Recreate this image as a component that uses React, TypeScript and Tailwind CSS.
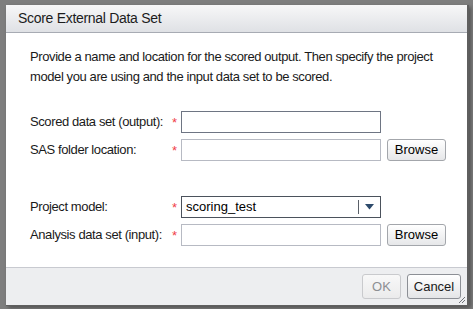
import type { ReactNode } from "react";

function Star() {
  return <span className="w-[9px] shrink-0 text-[13px] leading-none text-[#f0404a]">*</span>;
}

function Field({ dark }: { dark?: boolean }) {
  return (
    <div
      className={`h-[22px] w-[200px] shrink-0 border bg-white ${
        dark ? "border-[#6e7583]" : "border-[#b7bac3]"
      }`}
    />
  );
}

function BrowseButton() {
  return (
    <button className="ml-[6px] h-[22px] w-[59px] rounded-[3px] border border-[#a3a6ab] bg-gradient-to-b from-white to-[#e6e7e9] text-[13px] text-black">
      Browse
    </button>
  );
}

function Row({ label, children }: { label: string; children: ReactNode }) {
  return (
    <div className="flex items-center">
      <div className="w-[142px] shrink-0 whitespace-nowrap text-[13px] tracking-[-0.4px] text-[#1a1a1a]">
        {label}
      </div>
      <Star />
      {children}
    </div>
  );
}

export default function App() {
  return (
    <div
      className="h-[309px] w-[473px] overflow-hidden bg-[#7e7e7e] pl-[6px] pt-[5px]"
      style={{ fontFamily: '"Liberation Sans", Arial, sans-serif' }}
    >
      <div className="flex h-[301px] w-[463px] flex-col border-r-2 border-b border-[#5f5f5f] bg-white shadow-[2px_2px_4px_rgba(0,0,0,0.35)]">
        <div className="flex h-[28px] items-center border-b border-[#a7abb3] bg-gradient-to-b from-[#f7f7f8] to-[#dfe1e5] pl-[12px] text-[14px] tracking-[-0.3px] text-[#1c1c1c]">
          Score External Data Set
        </div>

        <div className="flex flex-1 flex-col pl-[24px] pt-[14px]">
          <p className="w-[425px] text-[13px] leading-[20px] tracking-[-0.4px] text-[#1a1a1a]">
            Provide a name and location for the scored output. Then specify the project model you are using and the input data set to be scored.
          </p>

          <div className="mt-[24px] flex flex-col gap-[6px]">
            <Row label="Scored data set (output):">
              <Field dark />
            </Row>
            <Row label="SAS folder location:">
              <Field />
              <BrowseButton />
            </Row>
          </div>

          <div className="mt-[35px] flex flex-col gap-[6px]">
            <Row label="Project model:">
              <div className="flex h-[22px] w-[200px] shrink-0 items-center border border-[#4b525c] bg-white">
                <span className="flex-1 pl-[4px] text-[13px] text-black">scoring_test</span>
                <div className="h-[14px] w-px bg-[#5a6068]" />
                <div className="flex w-[21px] justify-center">
                  <svg width="9" height="6" viewBox="0 0 9 6">
                    <path d="M0 0h9L4.5 5.5z" fill="#2d4a6b" />
                  </svg>
                </div>
              </div>
            </Row>
            <Row label="Analysis data set (input):">
              <Field />
              <BrowseButton />
            </Row>
          </div>
        </div>

        <div className="relative flex h-[38px] items-center justify-end gap-[6px] border-t border-[#c8cad0] bg-[#edeef0] pr-[6px]">
          <button className="h-[25px] w-[39px] rounded-[3px] border border-[#c9cacd] bg-gradient-to-b from-[#f8f8f8] to-[#ebebec] text-[13px] text-[#8d8f93]">
            OK
          </button>
          <button className="h-[25px] w-[54px] rounded-[3px] border border-[#8c8f95] bg-gradient-to-b from-white to-[#e4e5e7] text-[13px] text-[#1a1a1a]">
            Cancel
          </button>
          <svg className="absolute bottom-[1px] right-[1px]" width="8" height="8" viewBox="0 0 8 8">
            <path d="M7 1L1 7M7 4L4 7" stroke="#6f7278" strokeWidth="1" />
          </svg>
        </div>
      </div>
    </div>
  );
}
